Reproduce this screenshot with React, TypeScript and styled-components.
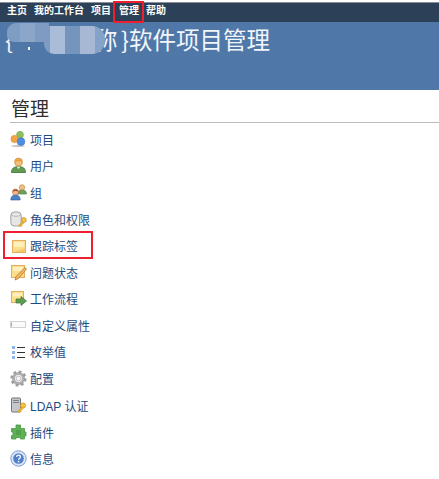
import React from 'react';
import styled, { createGlobalStyle } from 'styled-components';

const GlobalStyle = createGlobalStyle`
  html, body { margin: 0; padding: 0; background: #ffffff; }
  body { font-family: "Liberation Sans", "Noto Sans CJK SC", sans-serif; }
`;

const ProjectIcon = () => (
  <svg width="17" height="17" viewBox="0 0 17 17">
    <ellipse cx="8" cy="15" rx="7" ry="1.200" fill="#c8c8c8" />
    <circle cx="10" cy="3.800" r="3.500" fill="#8cc05c" stroke="#6fa548" strokeWidth=".5" />
    <circle cx="4.600" cy="8" r="3.700" fill="#f3a545" stroke="#dd8a2a" strokeWidth=".5" />
    <circle cx="11" cy="10.600" r="3.900" fill="#4f8ede" stroke="#3a72c0" strokeWidth=".5" />
  </svg>
);

const UserIcon = () => (
  <svg width="17" height="17" viewBox="0 0 17 17">
    <path d="M1.500 15.500c0-4 2.500-6 7-6s7 2 7 6z" fill="#5f9c52" stroke="#3d6f38" strokeWidth=".8" />
    <path d="M6.500 9.500h4l-2 2.500z" fill="#e8f0d8" />
    <circle cx="8.500" cy="5" r="3.900" fill="#f3c07e" stroke="#d08a30" strokeWidth=".8" />
    <path d="M4.600 5C4.800 1.200 12.200 1.200 12.400 5 9.500 3.800 7.500 3.800 4.600 5z" fill="#ea9a30" />
  </svg>
);

const GroupIcon = () => (
  <svg width="17" height="17" viewBox="0 0 17 17">
    <path d="M8 10c0-3 1.500-4.200 4-4.200s4.500 1.200 4.500 4.200z" fill="#6fa35c" stroke="#4b7a40" strokeWidth=".6" />
    <circle cx="12" cy="3.400" r="2.700" fill="#eec088" stroke="#b08030" strokeWidth=".6" />
    <path d="M.8 16c0-3.500 1.700-5 4.700-5s4.700 1.500 4.700 5z" fill="#4b7fc6" stroke="#2f5c9c" strokeWidth=".6" />
    <circle cx="5.500" cy="8" r="3" fill="#f2b98a" stroke="#b0623a" strokeWidth=".6" />
    <path d="M2.600 7.500c.4-2.600 5.400-2.600 5.800 0-2-.7-3.800-.7-5.800 0z" fill="#a8502a" />
  </svg>
);

const RoleIcon = () => (
  <svg width="17" height="17" viewBox="0 0 17 17">
    <rect x=".8" y="1" width="10.400" height="14" rx="3.500" fill="#e6e6e6" stroke="#a0a0a0" />
    <path d="M1.300 4c2 1.800 7.400 1.800 9.400 0" fill="none" stroke="#b8b8b8" />
    <circle cx="13.800" cy="9" r="2.500" fill="#f2c14e" stroke="#c98f1e" strokeWidth=".7" />
    <path d="M12.300 10.500l-4 4.300 1.500 1.200 1-1 .8.300.3-1.300 2-2z" fill="#eab53f" stroke="#c98f1e" strokeWidth=".5" />
  </svg>
);

const TagIcon = () => (
  <svg width="16" height="16" viewBox="0 0 16 16">
    <rect x="1.500" y="2.500" width="13" height="12" fill="#fbdf8a" stroke="#e8ad62" />
    <rect x="3" y="4" width="10" height="5" fill="#fdf0be" />
    <path d="M2 14h12V10.500z" fill="#f3c668" />
  </svg>
);

const StatusIcon = () => (
  <svg width="17" height="17" viewBox="0 0 17 17">
    <rect x="1.500" y="1.500" width="13" height="12" fill="#fbdf8a" stroke="#e8ad62" />
    <rect x="3" y="3" width="10" height="4" fill="#fdf0be" />
    <path d="M15 3.500l1.500 1.500-8 9.500-3.500 1.500 1-3.500z" fill="#f1b75c" stroke="#a8702a" strokeWidth=".7" />
  </svg>
);

const WorkflowIcon = () => (
  <svg width="17" height="17" viewBox="0 0 17 17">
    <rect x="1.500" y="1.500" width="12" height="11" fill="#fbdf8a" stroke="#e8ad62" />
    <rect x="3" y="3" width="9" height="3.500" fill="#fdf0be" />
    <path d="M6 9h5V6.500l5.500 4.500L11 15.500V13H6z" fill="#5e9e50" stroke="#3c7534" strokeWidth=".7" />
  </svg>
);

const FieldIcon = () => (
  <svg width="17" height="16" viewBox="0 0 17 16">
    <rect x=".5" y="4.500" width="15" height="6" fill="#fafafa" stroke="#d2d2d2" />
    <path d="M1.500 5.500v4" stroke="#a8a8a8" />
  </svg>
);

const EnumIcon = () => (
  <svg width="16" height="16" viewBox="0 0 16 16">
    <rect x="1" y="2" width="3" height="3" fill="#8fb4ea" />
    <rect x="1" y="7" width="3" height="3" fill="#8fb4ea" />
    <rect x="1" y="12" width="3" height="3" fill="#8fb4ea" />
    <path d="M6 3.500h8M6 8.500h8M6 13.500h8" stroke="#333" strokeWidth="1.100" />
  </svg>
);

const GearIcon = () => (
  <svg width="17" height="17" viewBox="0 0 17 17">
    <circle cx="8.500" cy="8.500" r="5" fill="none" stroke="#b0b0b0" strokeWidth="3.200" />
    <circle cx="8.500" cy="8.500" r="6.800" fill="none" stroke="#9c9c9c" strokeWidth="2.600" strokeDasharray="2.700 2.640" />
    <circle cx="8.500" cy="8.500" r="2.400" fill="#f4f4f4" stroke="#8a8a8a" strokeWidth=".5" />
  </svg>
);

const LdapIcon = () => (
  <svg width="17" height="17" viewBox="0 0 17 17">
    <rect x="1.500" y="1" width="9" height="14" rx="1" fill="#c4c8cc" stroke="#70767c" />
    <path d="M3 3.500h6M3 5.500h6" stroke="#7b8288" />
    <circle cx="13" cy="8.500" r="2.600" fill="#f4c240" stroke="#c98f1e" strokeWidth=".7" />
    <path d="M11.500 10l-4 4.500 1.500 1.200 1-1 .8.300.3-1.300 2-2z" fill="#eeb535" stroke="#c98f1e" strokeWidth=".5" />
  </svg>
);

const PluginIcon = () => (
  <svg width="17" height="16" viewBox="0 0 17 16">
    <path d="M6 1h4.500v3.500h4V8H16v4h-1.500v3h-4v-1.500H6V15H1.500v-3.500H3V8H1.500V4.500H6z" fill="#5fb055" stroke="#4a9a42" strokeWidth=".8" />
    <rect x="6" y="6" width="5" height="5" fill="#4a9a42" opacity=".6" />
  </svg>
);

const InfoIcon = () => (
  <svg width="17" height="17" viewBox="0 0 17 17">
    <circle cx="8.500" cy="8.500" r="7.700" fill="#dbe6f6" stroke="#7d9cce" />
    <circle cx="8.500" cy="8.500" r="5.300" fill="#4f7fc8" />
    <path d="M6.700 7c0-2.400 3.700-2.400 3.700 0 0 1.500-1.900 1.400-1.900 2.800" fill="none" stroke="#fff" strokeWidth="1.300" />
    <rect x="7.800" y="10.800" width="1.500" height="1.500" fill="#fff" />
  </svg>
);

const navItems = [
  { label: '主页', width: 20 },
  { label: '我的工作台', width: 50 },
  { label: '项目', width: 21 },
  { label: '管理', width: 20, active: true },
  { label: '帮助', width: 20 },
];

const adminItems = [
  { label: '项目', icon: <ProjectIcon />, height: 26 },
  { label: '用户', icon: <UserIcon />, height: 27 },
  { label: '组', icon: <GroupIcon />, height: 27 },
  { label: '角色和权限', icon: <RoleIcon />, height: 26 },
  { label: '跟踪标签', icon: <TagIcon />, height: 27, marked: true },
  { label: '问题状态', icon: <StatusIcon />, height: 26 },
  { label: '工作流程', icon: <WorkflowIcon />, height: 27 },
  { label: '自定义属性', icon: <FieldIcon />, height: 26 },
  { label: '枚举值', icon: <EnumIcon />, height: 27 },
  { label: '配置', icon: <GearIcon />, height: 27 },
  { label: 'LDAP 认证', icon: <LdapIcon />, height: 27 },
  { label: '插件', icon: <PluginIcon />, height: 26 },
  { label: '信息', icon: <InfoIcon />, height: 27 },
];

export default function App() {
  return (
    <Page>
      <GlobalStyle />
      <TopBar>
        {navItems.map((item) => (
          <NavLink key={item.label} $width={item.width} $active={item.active}>
            {item.label}
          </NavLink>
        ))}
      </TopBar>
      <Banner>
        <BannerTitle>
          {'{'}
          <HiddenName $masked>项目名</HiddenName>
          <HiddenName>称</HiddenName>
          {'}软件项目管理'}
          <BlurLeft />
          <BlurMain />
          <BlurSpeck />
        </BannerTitle>
      </Banner>
      <Content>
        <PageTitle>管理</PageTitle>
        <AdminList>
          {adminItems.map((item) => (
            <AdminRow key={item.label} $height={item.height}>
              <IconSlot>{item.icon}</IconSlot>
              <AdminLink>{item.label}</AdminLink>
              {item.marked && <RedMark />}
            </AdminRow>
          ))}
        </AdminList>
      </Content>
    </Page>
  );
}

const Page = styled.div`
  width: 439px;
  height: 479px;
  overflow: hidden;
  background: #ffffff;
  padding-top: 2px;
  box-sizing: border-box;
`;

const TopBar = styled.nav`
  height: 20px;
  box-sizing: border-box;
  background: #2c4058;
  border-top: 1px solid #8a8f98;
  display: flex;
  align-items: flex-start;
  padding: 1px 0 0 7px;
  gap: 7px;
`;

const NavLink = styled.a<{ $width: number; $active?: boolean }>`
  position: relative;
  width: ${(p) => p.$width}px;
  font-size: 10px;
  line-height: 14px;
  font-weight: 700;
  color: #ffffff;
  white-space: nowrap;

  ${(p) =>
    p.$active &&
    `
    &::after {
      content: '';
      position: absolute;
      left: -6px;
      top: -3px;
      width: 31px;
      height: 22px;
      border: 2px solid #ee2030;
      box-sizing: border-box;
    }
  `}
`;

const Banner = styled.header`
  height: 68px;
  background: #4f78a9;
  padding-left: 5px;
`;

const BannerTitle = styled.h1`
  position: relative;
  display: inline-block;
  margin: 0;
  font-size: 23.5px;
  line-height: 34px;
  font-weight: 400;
  color: #f2f5f9;
  font-family: "Noto Sans CJK SC", sans-serif;
`;

const HiddenName = styled.span<{ $masked?: boolean }>`
  letter-spacing: 3.5px;
  color: ${(p) => (p.$masked ? 'transparent' : 'inherit')};
`;

const BlurLeft = styled.span`
  position: absolute;
  left: 2px;
  top: 1px;
  width: 42px;
  height: 19px;
  border-radius: 9px 0 0 7px;
  background: linear-gradient(
    90deg,
    #7f9cc2 0 13px,
    #8ba6c9 13px 28px,
    #7f9bc2 28px
  );
`;

const BlurMain = styled.span`
  position: absolute;
  left: 39px;
  top: 4px;
  width: 61px;
  height: 28px;
  border-radius: 0 13px 13px 10px;
  background: linear-gradient(
    90deg,
    #7f9bc2 0 6px,
    #a9bdd8 6px 21px,
    #7695bd 21px 36px,
    #a6b8d3 36px 51px,
    #85a2c8 51px
  );
`;

const BlurSpeck = styled.span`
  position: absolute;
  left: 23px;
  top: 25px;
  width: 2px;
  height: 3px;
  background: #f2f5f9;
`;

const Content = styled.main`
  padding: 6px 0 0 10px;
`;

const PageTitle = styled.h2`
  margin: 0 0 3px;
  height: 26px;
  padding-left: 1px;
  font-size: 19px;
  line-height: 23px;
  font-weight: 400;
  color: #2f2f2f;
  border-bottom: 1px solid #bbbbbb;
  font-family: "Noto Sans CJK SC", sans-serif;
`;

const AdminList = styled.ul`
  list-style: none;
  margin: 0;
  padding: 0;
`;

const AdminRow = styled.li<{ $height: number }>`
  position: relative;
  height: ${(p) => p.$height}px;
  display: flex;
  align-items: center;
  gap: 3px;
`;

const IconSlot = styled.span`
  width: 17px;
  height: 17px;
  display: flex;
  align-items: center;
  justify-content: center;
  flex: none;
`;

const AdminLink = styled.a`
  font-size: 12px;
  color: #1f4a7c;
`;

const RedMark = styled.span`
  position: absolute;
  left: -7px;
  top: -1px;
  width: 90px;
  height: 28px;
  border: 2px solid #ee2030;
  box-sizing: border-box;
`;
